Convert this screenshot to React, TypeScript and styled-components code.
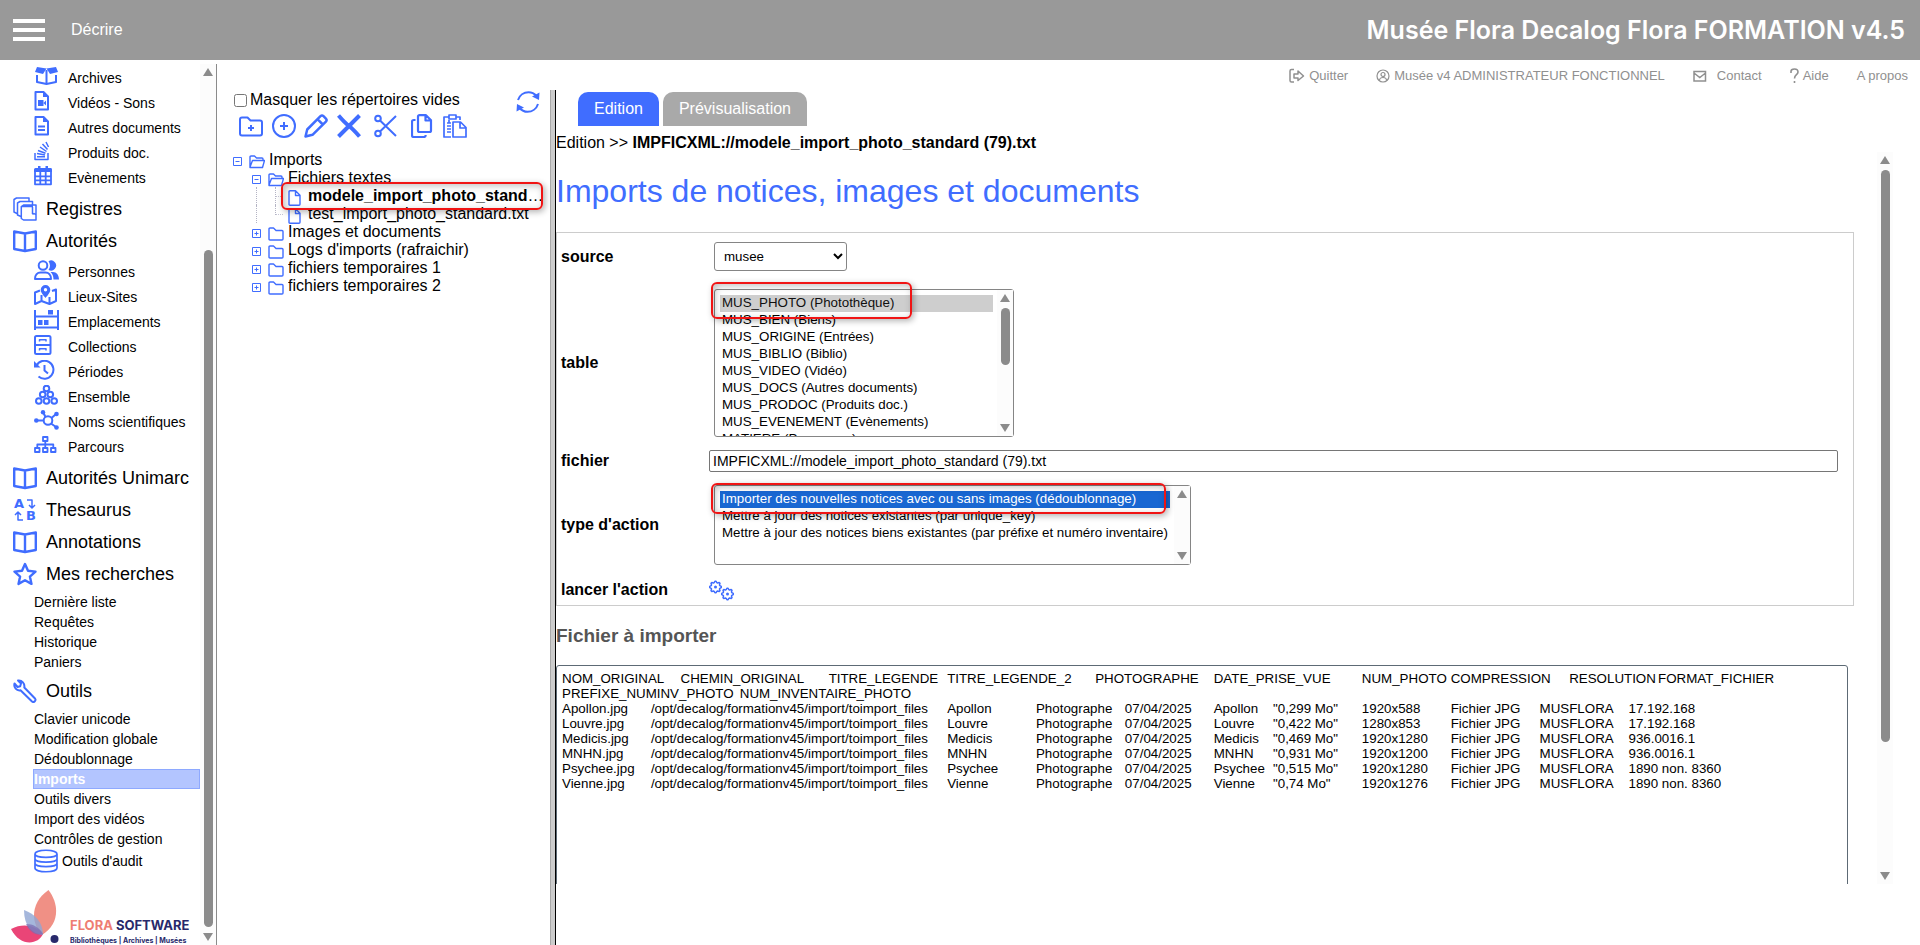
import React from 'react';
import styled, { createGlobalStyle, css } from 'styled-components';

const BLUE = '#406dff';
const SANS = '"Liberation Sans", Arial, sans-serif';

const GlobalStyle = createGlobalStyle`
  *, *::before, *::after { box-sizing: border-box; }
  body { margin: 0; background: #fff; color: #000; font: 16px/18px ${SANS}; }
  a { color: inherit; text-decoration: none; }
  button { margin: 0; padding: 0; border: 0; background: none; font: inherit; color: inherit; cursor: pointer; }
  ul { list-style: none; margin: 0; padding: 0; }
  h1, h2 { margin: 0; }
  svg { display: block; flex: none; }
`;

/* ---------- page frame ---------- */

const Shell = styled.div`
  display: grid;
  grid-template-rows: 60px minmax(0, 1fr);
  height: 100vh;
`;

const TopBar = styled.header`
  display: flex;
  align-items: center;
  padding: 0 15px 0 13px;
  background: #999;
  color: #fff;
`;

const Burger = styled.button`
  display: flex;
  flex-direction: column;
  gap: 5px;
  width: 32px;
  margin-right: 26px;
  span { height: 4px; background: #fff; }
`;

const Product = styled.strong`
  margin-left: auto;
  font: 600 25px/28px Inter, ${SANS};
`;

const Body = styled.div`
  display: grid;
  grid-template-columns: 217px 333px 6px minmax(0, 1fr);
  min-height: 0;
`;

/* ---------- scroll rail ---------- */

const RailBox = styled.div`
  display: flex;
  flex-direction: column;
  align-items: center;
  flex: none;
  width: 16px;
  background: #fcfcfc;
`;

const RailArrow = styled.span<{ $down?: boolean }>`
  display: grid;
  place-items: center;
  height: 16px;
  &::before {
    content: '';
    border: 5px solid transparent;
    ${(p) =>
      p.$down
        ? css`border-top: 8px solid #8b8b8b; border-bottom: 0;`
        : css`border-bottom: 8px solid #8b8b8b; border-top: 0;`}
  }
`;

const RailPart = styled.span<{ $grow: number; $thumb?: boolean }>`
  flex: ${(p) => p.$grow} 1 0;
  width: 9px;
  border-radius: 5px;
  background: ${(p) => (p.$thumb ? '#8b8b8b' : 'transparent')};
`;

function Rail({ before, size = 0, after = 0 }: { before: number; size?: number; after?: number }) {
  return (
    <RailBox aria-hidden="true">
      <RailArrow />
      <RailPart $grow={before} />
      {size > 0 && <RailPart $grow={size} $thumb />}
      <RailPart $grow={after} />
      <RailArrow $down />
    </RailBox>
  );
}

/* ---------- drawings ---------- */

const Line = styled.svg<{ $w?: number }>`
  fill: none;
  stroke: ${BLUE};
  stroke-width: ${(p) => p.$w ?? 2};
  stroke-linejoin: round;
  .f { fill: ${BLUE}; stroke: none; }
`;

const small: Record<string, React.ReactNode> = {
  archives: (
    <>
      <path className="f" d="M3 1l9.500 1.500L9 8 1 6zM22 1l-9.500 1.500L16 8l8-2z" />
      <path d="M3 9v7l9.500 2 9.500-2V9M12.500 4v14" />
    </>
  ),
  video: (
    <>
      <path d="M1.500 1h8l4.500 4.500v13H1.500z" />
      <path className="f" d="M9 0l6 6H9zM4 9h5.500v6H4zM9.500 12l2.500-2.500v5z" />
    </>
  ),
  doc: (
    <>
      <path d="M1.500 1h8l4.500 4.500v13H1.500z" />
      <path className="f" d="M9 0l6 6H9z" />
      <path d="M4 10.500h7M4 14h7" />
    </>
  ),
  stack: (
    <path strokeWidth="1.500" d="M1 12v6.500h13V12M3 15.800h8M3 12.500l8 1.500M4 9.500l7.500 2.700M6 6l6.500 4.500M8.500 3l5 5.500M12 1l2.500 5" />
  ),
  calendar: (
    <>
      <path className="f" d="M0 3.500Q0 2 1.500 2H17q1 0 1 1.500V6H0zM4 0h2.500v3H4zM11.500 0H14v3h-2.500z" />
      <path strokeWidth="1.800" d="M1 6v12.300h16V6M6.300 6v12M11.700 6v12M1 10.300h16M1 14.300h16" />
    </>
  ),
  people: (
    <>
      <circle cx="9" cy="5.500" r="4.300" />
      <path d="M1 19c0-4 2.500-6.500 5.500-6.500h5c3 0 5.500 2.500 5.500 6.500z" />
      <path className="f" d="M14.500 1.200a5 5 0 1 1 0 8.600q3-4.300 0-8.600zM16.500 12H19c3.500 0 6 3 6 7.500h-5.500q0-5-3-7.500z" />
    </>
  ),
  map: (
    <>
      <path d="M6 5.500l-5 2V19l6.500-3 8 3 6.500-3V4.500l-4 1.500M7.500 10v6M15.500 12v7" />
      <path className="f" fillRule="evenodd" d="M11.500 0a4.800 4.800 0 0 1 4.800 4.800c0 2.800-3 6-4.800 8.200-1.800-2.200-4.800-5.400-4.800-8.200A4.800 4.800 0 0 1 11.500 0zm0 3a1.700 1.700 0 1 0 0 3.400 1.700 1.700 0 0 0 0-3.400z" />
    </>
  ),
  shelf: (
    <>
      <path d="M1 0v20M24 0v20M1 6.500h23M1 17.500h23" />
      <path className="f" d="M14 0h5v4.500h-5zM4 10h4.500v5H4zM10 10h4.500v5H10z" />
    </>
  ),
  cabinet: (
    <>
      <rect x="1" y="1" width="15.500" height="18" rx="1.500" />
      <path d="M1 10h15.500" />
      <path strokeWidth="1.500" d="M5.500 6.500V4.700h6.500v1.800M5.500 15.500v-1.800h6.500v1.800" />
    </>
  ),
  history: (
    <>
      <path d="M2.500 5.500A9 9 0 1 1 4.500 16.500" />
      <path d="M10.500 5v5.500l3.500 3" />
      <path className="f" d="M0 1v6.500h6.500z" />
    </>
  ),
  group: (
    <>
      {[[12.5, 3.5], [8.7, 9.5], [16.3, 9.5], [4.8, 16], [12.5, 16], [20.2, 16]].map(([x, y]) => (
        <circle key={`${x}-${y}`} cx={x} cy={y} r="2.800" />
      ))}
    </>
  ),
  molecule: (
    <>
      <circle cx="14" cy="10.500" r="4.300" />
      <path d="M3 10.500h6M11.500 7l-2-4M17.500 8l4-3.500M17 13.500l5 3.500" />
      <circle className="f" cx="2.300" cy="10.500" r="2.300" />
      <circle className="f" cx="9" cy="2.200" r="2.200" />
      <circle className="f" cx="22.500" cy="4" r="2.300" />
      <circle className="f" cx="22.500" cy="17.500" r="2.300" />
    </>
  ),
  sitemap: (
    <path strokeWidth="1.800" d="M9 2h4.500v4H9zM1 13h4.500v4H1zM9 13h4.500v4H9zM17 13h4.500v4H17zM11.300 6v7M3.300 13V9.500h16V13" />
  ),
};

const large: Record<string, React.ReactNode> = {
  registers: (
    <path strokeWidth="1.500" d="M4 16.500L1 15V2.500L3.500 1H16v3.500M8 19.500L4.500 18V6L7 4.500h12.500v3M8.300 9.500L10.500 8H23v15H10.500l-2.200-1.500zM8.300 9.500H20M19.500 10v7M22.500 17.500l-1.500-1-1.500 1" />
  ),
  book: <path d="M12 4.500L1.200 2.500v17.500L12 22l10.800-2V2.500zM12 4.500V22" strokeWidth="2.400" />,
  star: <path d="M12 2l3 6.800 7.500.8-5.600 5 1.600 7.300L12 18.200l-6.500 3.700 1.600-7.300-5.600-5 7.500-.8z" strokeWidth="2.400" />,
  wrench: (
    <path d="M1.500 4.500c-1 4 2 7.500 6 6.800L19 22.500c2 1.500 4.500-1 3-3L11.300 8.500C12 4.500 9 1 5 1.500l3 3-.8 2.700-2.700.8z" />
  ),
  database: (
    <path strokeWidth="1.700" d="M1 5c0-5 22-5 22 0v14c0 5-22 5-22 0zM1 5c0 4.500 22 4.500 22 0M1 9.700c0 4.500 22 4.500 22 0M1 14.300c0 4.500 22 4.500 22 0" />
  ),
};

const ThesaurusBox = styled.span`
  display: grid;
  grid-template-columns: 12px 12px;
  grid-template-rows: 12px 12px;
  place-items: center;
  width: 24px;
  color: ${BLUE};
  font: 900 13px/12px "DejaVu Sans", ${SANS};
`;

function Thesaurus() {
  return (
    <ThesaurusBox aria-hidden="true">
      <span>A</span>
      <Line width="10" height="10" viewBox="0 0 10 10" $w={1.5}><path d="M1 1h5v8M3 6l3 3 3-3" /></Line>
      <Line width="10" height="10" viewBox="0 0 10 10" $w={1.5}><path d="M9 9H4V1M1 4l3-3 3 3" /></Line>
      <span>B</span>
    </ThesaurusBox>
  );
}

/* ---------- sidebar ---------- */

const Side = styled.nav`
  display: flex;
  min-height: 0;
  margin-top: 4px;
  border-right: 1px solid #8b8b8b;
`;

const SideScroll = styled.div`
  flex: 1;
  min-width: 0;
  overflow: hidden;
`;

const Section = styled.a`
  display: flex;
  align-items: center;
  gap: 9px;
  height: 32px;
  padding-left: 13px;
  font-size: 18px;
`;

const SubList = styled.ul<{ $first?: boolean }>`
  padding: ${(p) => (p.$first ? 1 : 2)}px 0 3px 34px;
  font-size: 14px;
`;

const IconEntry = styled.a`
  display: grid;
  grid-template-columns: 34px 1fr;
  align-items: center;
  height: 25px;
  svg { margin-bottom: 4px; }
`;

const TextEntry = styled.a<{ $on?: boolean }>`
  display: flex;
  align-items: center;
  height: 20px;
  margin-left: -1px;
  padding-left: 1px;
  ${(p) =>
    p.$on &&
    css`
      padding-left: 0;
      border: 1px solid #8ea9ff;
      background: #b3c5ff;
      color: #fff;
      font-weight: bold;
    `}
`;

const AuditEntry = styled.a`
  display: flex;
  align-items: center;
  gap: 4px;
  height: 24px;
`;

const Brand = styled.div`
  display: flex;
  gap: 11px;
  margin: 14px 0 0 10px;
`;

const BrandText = styled.div`
  display: flex;
  flex-direction: column;
  padding-top: 27px;
  color: #28296b;
  white-space: nowrap;
  strong { font: 700 13px/17px Inter, ${SANS}; }
  em { color: #ee7d72; font-style: normal; }
  small { font: 700 7px/14px Inter, ${SANS}; }
`;

const documents = [
  ['archives', 'Archives'],
  ['video', 'Vidéos - Sons'],
  ['doc', 'Autres documents'],
  ['stack', 'Produits doc.'],
  ['calendar', 'Evènements'],
];

const authorities = [
  ['people', 'Personnes'],
  ['map', 'Lieux-Sites'],
  ['shelf', 'Emplacements'],
  ['cabinet', 'Collections'],
  ['history', 'Périodes'],
  ['group', 'Ensemble'],
  ['molecule', 'Noms scientifiques'],
  ['sitemap', 'Parcours'],
];

const searches = ['Dernière liste', 'Requêtes', 'Historique', 'Paniers'];
const tools = [
  'Clavier unicode',
  'Modification globale',
  'Dédoublonnage',
  'Imports',
  'Outils divers',
  'Import des vidéos',
  'Contrôles de gestion',
];

function IconList({ items, first }: { items: string[][]; first?: boolean }) {
  return (
    <SubList $first={first}>
      {items.map(([icon, label]) => (
        <li key={label}>
          <IconEntry href="#">
            <Line width="25" height="20" viewBox="0 0 25 20">{small[icon]}</Line>
            {label}
          </IconEntry>
        </li>
      ))}
    </SubList>
  );
}

function SectionLink({ icon, label }: { icon: string; label: string }) {
  return (
    <Section href="#">
      {icon === 'thesaurus' ? (
        <Thesaurus />
      ) : (
        <Line width="24" height="24" viewBox="0 0 24 24">{large[icon]}</Line>
      )}
      {label}
    </Section>
  );
}

function Sidebar() {
  return (
    <Side aria-label="Menu principal">
      <SideScroll>
        <IconList items={documents} first />
        <SectionLink icon="registers" label="Registres" />
        <SectionLink icon="book" label="Autorités" />
        <IconList items={authorities} />
        <SectionLink icon="book" label="Autorités Unimarc" />
        <SectionLink icon="thesaurus" label="Thesaurus" />
        <SectionLink icon="book" label="Annotations" />
        <SectionLink icon="star" label="Mes recherches" />
        <SubList>
          {searches.map((s) => (
            <li key={s}><TextEntry href="#">{s}</TextEntry></li>
          ))}
        </SubList>
        <SectionLink icon="wrench" label="Outils" />
        <SubList>
          {tools.map((s) => (
            <li key={s}><TextEntry href="#" $on={s === 'Imports'}>{s}</TextEntry></li>
          ))}
          <li>
            <AuditEntry href="#">
              <Line width="24" height="24" viewBox="0 0 24 24">{large.database}</Line>
              Outils d'audit
            </AuditEntry>
          </li>
        </SubList>
        <Brand>
          <svg width="49" height="54" viewBox="0 0 49 54" aria-hidden="true">
            <path fill="#f09085" d="M38.500 0C50 15 49 35 32 45 20 32 21 12 38.500 0z" />
            <path fill="#ea4577" d="M1 39c12-6 24-4 32 5-5 11-23 13-32-5z" />
            <path fill="#8fa5d3" fillOpacity=".8" d="M14 20c11 4 19 12 19 25-11-1-19-9-19-25z" />
            <path fill="#7a6bb0" fillOpacity=".7" d="M16 34c7 0 13 3 17 10-6 2-13-1-17-10z" />
            <circle cx="44.500" cy="49" r="4" fill="#28296b" />
          </svg>
          <BrandText>
            <strong><em>FLORA</em> SOFTWARE</strong>
            <small>Bibliothèques | Archives | Musées</small>
          </BrandText>
        </Brand>
      </SideScroll>
      <Rail before={170} size={677} after={2} />
    </Side>
  );
}

/* ---------- highlight frame laid over content ---------- */

const Highlight = styled.span<{ $x: number; $y: number; $w: number; $h: number }>`
  position: absolute;
  left: ${(p) => p.$x}px;
  top: ${(p) => p.$y}px;
  width: ${(p) => p.$w}px;
  height: ${(p) => p.$h}px;
  border: 2px solid #f01414;
  border-radius: 6px;
  box-shadow: 2px 2px 6px rgba(0, 0, 0, 0.3), inset 2px 2px 7px rgba(0, 0, 0, 0.25);
  pointer-events: none;
`;

/* ---------- tree ---------- */

const TreePane = styled.section`
  padding: 30px 4px 0 16px;
  min-width: 0;
`;

const TreeHead = styled.div`
  display: flex;
  align-items: center;
  justify-content: space-between;
  height: 24px;
  padding-right: 6px;
  label { display: flex; align-items: center; gap: 3px; margin-bottom: 5px; }
  input { width: 13px; height: 13px; margin: 2px 0 0 1px; }
`;

const Tools = styled.div`
  display: grid;
  grid-template-columns: 33px 32px 33px 37px 37px 32px 24px;
  padding-left: 6px;
`;

const Tree = styled.ul`
  position: relative;
  margin-top: 13px;
`;

const Row = styled.li`
  display: flex;
  align-items: center;
  height: 18px;
`;

const Indent = styled.span`
  flex: none;
  width: 19px;
`;

const Guide = styled.span<{ $last?: boolean; $branch?: boolean }>`
  flex: none;
  align-self: flex-start;
  width: ${(p) => (p.$branch ? 13 : 15)}px;
  height: ${(p) => (p.$last ? 10 : 18)}px;
  margin-left: 4px;
  border-left: 1px dotted #b4b4c4;
  ${(p) =>
    p.$branch &&
    css`
      background: linear-gradient(90deg, #c4c4d4 50%, transparent 50%) 0 9px / 2px 1px repeat-x;
      background-clip: content-box;
      padding-right: 4px;
    `}
`;

const Toggle = styled.button`
  flex: none;
  width: 16px;
  margin-top: 3px;
`;

const Cell = styled.span`
  flex: none;
  width: 20px;
  margin-top: 3px;
`;

const Name = styled.a`
  min-width: 0;
  overflow: hidden;
  white-space: nowrap;
`;

type Node = { level: number; label: string; kind: 'open' | 'closed' | 'file'; on?: boolean; last?: boolean };

const nodes: Node[] = [
  { level: 0, label: 'Imports', kind: 'open' },
  { level: 1, label: 'Fichiers textes', kind: 'open' },
  { level: 2, label: 'modele_import_photo_stand', kind: 'file', on: true },
  { level: 2, label: 'test_import_photo_standard.txt', kind: 'file', last: true },
  { level: 1, label: 'Images et documents', kind: 'closed' },
  { level: 1, label: "Logs d'imports (rafraichir)", kind: 'closed' },
  { level: 1, label: 'fichiers temporaires 1', kind: 'closed' },
  { level: 1, label: 'fichiers temporaires 2', kind: 'closed' },
];

const nodeArt = {
  open: <path d="M1 13V3Q1 2 2 2h3.500l2 2H13q1 0 1 1v1.500M1 13l2.500-6.500H15.500L13.500 13.500H1z" />,
  closed: <path d="M2 2h3.500l2.500 2.500H14q1 0 1 1V13q0 1-1 1H2q-1 0-1-1V3Q1 2 2 2z" />,
  file: <path d="M2 .8h5.500L12 5.300v8.900q0 1-1 1H2q-1 0-1-1V1.800Q1 .8 2 .8zM7.500 1v4.500H12" />,
};

function TreeRow({ node }: { node: Node }) {
  return (
    <Row>
      {node.level > 0 && <Indent />}
      {node.kind === 'file' ? (
        <>
          <Guide />
          <Guide $branch $last={node.last} />
        </>
      ) : (
        <Toggle aria-label={node.kind === 'open' ? 'Replier' : 'Déplier'}>
          <Line width="9" height="9" viewBox="0 0 9 9" $w={1}>
            <path d={`M.5.5h8v8h-8zM2.500 4.500h4${node.kind === 'closed' ? 'M4.500 2.500v4' : ''}`} />
          </Line>
        </Toggle>
      )}
      <Cell>
        <Line width="16" height="16" viewBox="0 0 16 16" $w={1.4}>{nodeArt[node.kind]}</Line>
      </Cell>
      <Name href="#">{node.on ? <><b>{node.label}</b>…</> : node.label}</Name>
    </Row>
  );
}

const toolbar: [string, React.ReactNode][] = [
  [
    'Nouveau dossier',
    <path d="M3 3.500h5.500l3 3H21q2 0 2 2v11q0 2-2 2H3q-2 0-2-2v-14q0-2 2-2zM12 11v6M9 14h6" />,
  ],
  ['Ajouter', <><circle cx="12" cy="12" r="11" /><path d="M12 8v8M8 12h8" /></>],
  ['Modifier', <path d="M1.500 22.500l1.700-7L16.500 2.200q1.500-1.400 3 0l2.400 2.400q1.400 1.500 0 3L8.500 20.800zM13.500 5.200l5.300 5.300" strokeWidth="2.500" />],
  ['Supprimer', <path d="M1.500 1.500Q8 9 12 12t10.500 10.500M22.500 1.500Q16 8 12 12T1.500 22.500" strokeWidth="4" />],
  [
    'Couper',
    <><circle cx="4" cy="4.500" r="2.800" /><circle cx="4" cy="19.500" r="2.800" /><path d="M6 6.500L22 22M6 17.500L22 2" /></>,
  ],
  [
    'Copier',
    <path strokeWidth="2.200" d="M8.500 1.200H15l5 5v10.300q0 1.500-1.500 1.500h-10Q7 18 7 16.500v-14Q7 1.200 8.500 1.200zM14.500 1.200v5.300H20M4.500 6H2.700Q1 6 1 7.700v13.600Q1 23 2.700 23H13q1.700 0 1.700-2" />,
  ],
  [
    'Coller',
    <path strokeWidth="1.700" d="M8 23H1V3h5M13 3h4v3M6 5V1h7v4zM4 9h4M4 12h4M4 15h4M4 18h4M6 6v3M10 8h7.500l5.500 5.500V23H10zM17 8v6h6" />,
  ],
];

function TreePanel() {
  return (
    <TreePane>
      <TreeHead>
        <label htmlFor="hide-empty">
          <input id="hide-empty" type="checkbox" />
          Masquer les répertoires vides
        </label>
        <button aria-label="Rafraîchir">
          <Line width="24" height="22" viewBox="0 0 24 22">
            <path d="M2 9C3.500 4 8 1.200 12.500 1.200c3.500 0 6 1.500 8 3.800M22 13c-1.500 5-6 7.800-10.500 7.800-3.500 0-6-1.500-8-3.800" />
            <path className="f" d="M23.500 1.500L23 9l-7-3.500zM.5 20.500L1 13l7 3.500z" />
          </Line>
        </button>
      </TreeHead>
      <Tools>
        {toolbar.map(([label, art]) => (
          <button key={label} aria-label={label}>
            <Line width="24" height="24" viewBox="0 0 24 24">{art}</Line>
          </button>
        ))}
      </Tools>
      <Tree>
        {nodes.map((n) => <TreeRow key={n.label} node={n} />)}
        <Highlight as="li" $x={48} $y={31} $w={262} $h={28} aria-hidden="true" />
      </Tree>
    </TreePane>
  );
}

/* ---------- splitter ---------- */

const Splitter = styled.div`
  margin-top: 30px;
  border-left: 1px solid #a8a8a8;
  border-right: 1px solid #000;
  background: #ccc;
`;

/* ---------- content ---------- */

const Main = styled.main`
  display: flex;
  flex-direction: column;
  min-height: 0;
  padding-bottom: 61px;
`;

const UserLinks = styled.nav`
  display: flex;
  justify-content: flex-end;
  gap: 28px;
  height: 32px;
  padding-right: 12px;
  color: #909090;
  font-size: 13px;
  a { display: flex; align-items: center; gap: 4px; }
  svg { fill: none; stroke: #909090; }
`;

const Tabs = styled.div`
  display: flex;
  gap: 4px;
  padding-left: 22px;
`;

const Tab = styled.button<{ $on?: boolean }>`
  height: 34px;
  padding: 0 16px;
  border-radius: 10px 10px 0 0;
  background: ${(p) => (p.$on ? BLUE : '#a9a9a9')};
  color: #fff;
`;

const Crumb = styled.p`
  margin: 0;
  padding-top: 8px;
`;

const Viewport = styled.div`
  display: flex;
  flex: 1;
  min-height: 0;
  margin-right: 27px;
`;

const Sheet = styled.div`
  flex: 1;
  min-width: 0;
  padding: 21px 23px 0 0;
  overflow: hidden;
`;

const Title = styled.h1`
  color: ${BLUE};
  font-size: 32px;
  font-weight: normal;
  line-height: 37px;
`;

const Form = styled.form`
  display: grid;
  grid-template-columns: 140px minmax(0, 1fr);
  align-items: center;
  gap: 8px;
  margin: 22px 0 19px;
  padding: 4px 15px 3px 4px;
  border: 1px solid #ccc;
`;

const FieldLabel = styled.label`
  font-weight: bold;
`;

const Drop = styled.select`
  width: 133px;
  height: 29px;
  margin: 5px;
  padding: 0 5px;
  border: 1px solid #858585;
  border-radius: 3px;
  background-color: #fff;
  color: #000;
  font-family: ${SANS};
`;

const ListFrame = styled.div<{ $w: number; $h: number }>`
  position: relative;
  display: flex;
  width: ${(p) => p.$w}px;
  height: ${(p) => p.$h}px;
  margin: 5px;
  border: 1px solid #858585;
  border-radius: 3px;
`;

const List = styled.select<{ $active?: boolean }>`
  flex: 1;
  min-width: 0;
  padding: 5px 4px 0 5px;
  border: 0;
  outline: 0;
  background: transparent;
  color: #000;
  font-family: ${SANS};
  overflow: hidden;
  scrollbar-width: none;
  &::-webkit-scrollbar { display: none; }
  option { height: 17px; min-height: 17px; padding: 0 2px 1px; }
  ${(p) =>
    p.$active &&
    css`
      option:checked {
        background-image: linear-gradient(#1967d2, #1967d2);
        -webkit-text-fill-color: #fff;
      }
    `}
`;

const PathInput = styled.input`
  width: 100%;
  height: 22px;
  padding: 1px 3px;
  border: 1px solid #767676;
  border-radius: 2px;
  font-family: ${SANS};
  font-size: 14px;
  color: #000;
`;

const Launch = styled.button`
  width: 26px;
  height: 24px;
`;

const SubTitle = styled.h2`
  color: #555;
  font-size: 19px;
  line-height: 22px;
`;

const FileText = styled.textarea`
  display: block;
  width: calc(100% - 6px);
  height: 360px;
  margin-top: 18px;
  padding: 5px;
  border: 1px solid #5d6a75;
  border-radius: 3px;
  outline: 0;
  resize: none;
  overflow: hidden;
  color: #000;
  font-family: ${SANS};
  line-height: 15px;
`;

const tables = [
  'MUS_PHOTO (Photothèque)',
  'MUS_BIEN (Biens)',
  'MUS_ORIGINE (Entrées)',
  'MUS_BIBLIO (Biblio)',
  'MUS_VIDEO (Vidéo)',
  'MUS_DOCS (Autres documents)',
  'MUS_PRODOC (Produits doc.)',
  'MUS_EVENEMENT (Evènements)',
  'MATIERE (Personnes)',
];

const actions = [
  'Importer des nouvelles notices avec ou sans images (dédoublonnage)',
  'Mettre à jour des notices existantes (par unique_key)',
  'Mettre à jour des notices biens existantes (par préfixe et numéro inventaire)',
];

const columns = [
  'NOM_ORIGINAL', 'CHEMIN_ORIGINAL', 'TITRE_LEGENDE', 'TITRE_LEGENDE_2', 'PHOTOGRAPHE', 'DATE_PRISE_VUE',
  'NUM_PHOTO', 'COMPRESSION', 'RESOLUTION', 'FORMAT_FICHIER', 'PREFIXE_NUMINV_PHOTO', 'NUM_INVENTAIRE_PHOTO',
];

const photos = [
  ['Apollon', '"0,299 Mo"', '1920x588', '17.192.168'],
  ['Louvre', '"0,422 Mo"', '1280x853', '17.192.168'],
  ['Medicis', '"0,469 Mo"', '1920x1280', '936.0016.1'],
  ['MNHN', '"0,931 Mo"', '1920x1200', '936.0016.1'],
  ['Psychee', '"0,515 Mo"', '1920x1280', '1890 non. 8360'],
  ['Vienne', '"0,74 Mo"', '1920x1276', '1890 non. 8360'],
];

const fileText = [
  columns.join('\t'),
  ...photos.map(([name, weight, size, number]) =>
    [
      `${name}.jpg`, '/opt/decalog/formationv45/import/toimport_files', name, '', 'Photographe', '07/04/2025',
      name, weight, size, 'Fichier JPG', 'MUSFLORA', number,
    ].join('\t'),
  ),
].join('\n');

/* Outline of an eight-toothed wheel. */
function gear(cx: number, cy: number, r: number) {
  const pts = Array.from({ length: 32 }, (_, i) => {
    const a = ((i - 0.5) / 32) * Math.PI * 2 - Math.PI / 2;
    const k = i % 4 < 2 ? r : r * 0.78;
    return `${(cx + Math.cos(a) * k).toFixed(2)} ${(cy + Math.sin(a) * k).toFixed(2)}`;
  });
  return `M${pts.join('L')}Z`;
}

export default function App() {
  return (
    <>
      <GlobalStyle />
      <Shell>
        <TopBar>
          <Burger aria-label="Menu"><span /><span /><span /></Burger>
          <span>Décrire</span>
          <Product>Musée Flora Decalog Flora FORMATION v4.5</Product>
        </TopBar>
        <Body>
          <Sidebar />
          <TreePanel />
          <Splitter />
          <Main>
            <UserLinks aria-label="Compte">
              <a href="#">
                <svg width="16" height="16" viewBox="0 0 16 16" strokeWidth="1.500" strokeLinejoin="round">
                  <path d="M5 1.500H2.500q-1.500 0-1.500 1.500v9.500q0 1.500 1.500 1.500H5M5 6h4V3l5.500 5L9 12.500V10H5z" />
                </svg>
                Quitter
              </a>
              <a href="#">
                <svg width="14" height="14" viewBox="0 0 14 14" strokeWidth="1.200">
                  <circle cx="7" cy="7" r="6" /><circle cx="7" cy="5.500" r="2" /><path d="M3.500 11.500c0-4 7-4 7 0" />
                </svg>
                Musée v4 ADMINISTRATEUR FONCTIONNEL
              </a>
              <a href="#">
                <svg width="20" height="14" viewBox="0 0 20 14" strokeWidth="1.500">
                  <path d="M1 2.500h11.500v9.500H1zM1 4l5.800 4.500L12.500 4" />
                </svg>
                Contact
              </a>
              <a href="#">
                <svg width="9" height="16" viewBox="0 0 9 16" strokeWidth="1.600">
                  <path d="M1 5V3.500Q1 1 4.500 1T8 4c0 3-3.500 2.500-3.500 6.500M4.500 13v2" />
                </svg>
                Aide
              </a>
              <a href="#">A propos</a>
            </UserLinks>
            <Tabs role="tablist">
              <Tab role="tab" aria-selected="true" $on>Edition</Tab>
              <Tab role="tab" aria-selected="false">Prévisualisation</Tab>
            </Tabs>
            <Crumb>Edition &gt;&gt; <b>IMPFICXML://modele_import_photo_standard (79).txt</b></Crumb>
            <Viewport>
              <Sheet>
                <Title>Imports de notices, images et documents</Title>
                <Form onSubmit={(e) => e.preventDefault()}>
                  <FieldLabel htmlFor="source">source</FieldLabel>
                  <Drop id="source"><option>musee</option></Drop>

                  <FieldLabel htmlFor="table">table</FieldLabel>
                  <ListFrame $w={300} $h={148}>
                    <List id="table" size={8} defaultValue={tables[0]}>
                      {tables.map((t) => <option key={t}>{t}</option>)}
                    </List>
                    <Rail before={2} size={57} after={55} />
                    <Highlight $x={-4} $y={-8} $w={201} $h={37} />
                  </ListFrame>

                  <FieldLabel htmlFor="file">fichier</FieldLabel>
                  <PathInput id="file" type="text" defaultValue="IMPFICXML://modele_import_photo_standard (79).txt" />

                  <FieldLabel htmlFor="action">type d'action</FieldLabel>
                  <ListFrame $w={477} $h={80}>
                    <List id="action" size={4} defaultValue={actions[0]} $active>
                      {actions.map((t) => <option key={t}>{t}</option>)}
                    </List>
                    <Rail before={1} />
                    <Highlight $x={-4} $y={-3} $w={455} $h={31} />
                  </ListFrame>

                  <FieldLabel htmlFor="launch">lancer l'action</FieldLabel>
                  <Launch id="launch" type="button">
                    <Line width="26" height="24" viewBox="0 0 26 24" $w={1.5}>
                      <path d={gear(6.5, 9, 5.8)} /><path d={gear(18.5, 16, 5.8)} />
                      <circle className="f" cx="6.500" cy="9" r="1.500" /><circle className="f" cx="18.500" cy="16" r="1.500" />
                    </Line>
                  </Launch>
                </Form>
                <SubTitle id="file-title">Fichier à importer</SubTitle>
                <FileText aria-labelledby="file-title" defaultValue={fileText} spellCheck={false} />
              </Sheet>
              <Rail before={2} size={572} after={126} />
            </Viewport>
          </Main>
        </Body>
      </Shell>
    </>
  );
}
